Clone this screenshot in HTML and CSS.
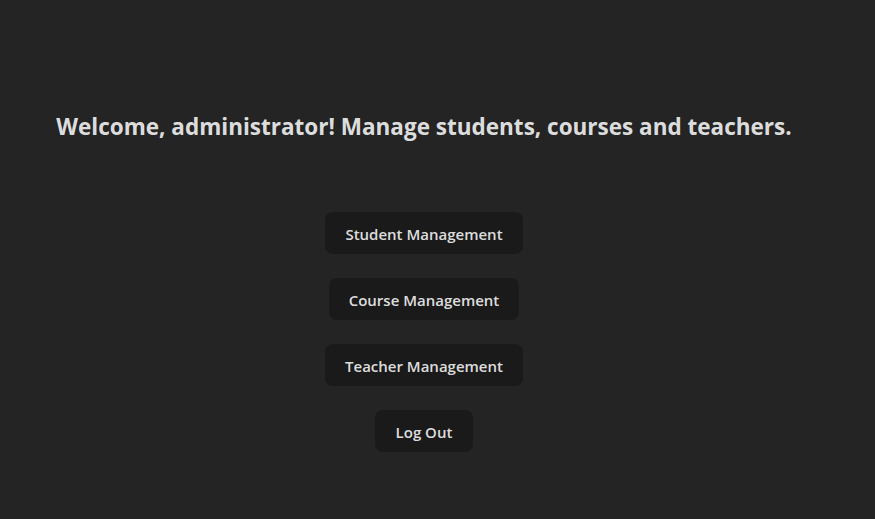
FILE: index.html
```html
<!DOCTYPE html>
<html>
<head>
<meta charset="utf-8">
<link rel="stylesheet" href="styles.css">
</head>
<body>
<main class="page">
  <h1 class="welcome">Welcome, administrator! Manage students, courses and teachers.</h1>
  <nav class="actions">
    <button class="btn">Student Management</button>
    <button class="btn">Course Management</button>
    <button class="btn">Teacher Management</button>
    <button class="btn">Log Out</button>
  </nav>
</main>
</body>
</html>
```
FILE: styles.css
```css
html, body {
  margin: 0;
  background: #242424;
}
body {
  font-family: "Open Sans", "Noto Sans", sans-serif;
  color: rgba(255, 255, 255, 0.87);
  height: 519px;
  overflow: hidden;
}
.page {
  width: 848px;
  display: flex;
  flex-direction: column;
  align-items: center;
  padding-top: 109px;
}
.welcome {
  margin: 0;
  font-size: 22.5px;
  font-weight: 700;
  line-height: 36px;
  white-space: nowrap;
}
.actions {
  display: flex;
  flex-direction: column;
  align-items: center;
  gap: 24px;
  margin-top: 67px;
}
.btn {
  font-family: inherit;
  font-size: 15px;
  font-weight: 600;
  color: rgba(255, 255, 255, 0.87);
  background: #1a1a1a;
  border: 1px solid transparent;
  border-radius: 8px;
  padding: 1px 19px 0;
  height: 42px;
  line-height: 40px;
  cursor: pointer;
}
.btn:last-child {
  padding: 1px 20px 0;
}
```
